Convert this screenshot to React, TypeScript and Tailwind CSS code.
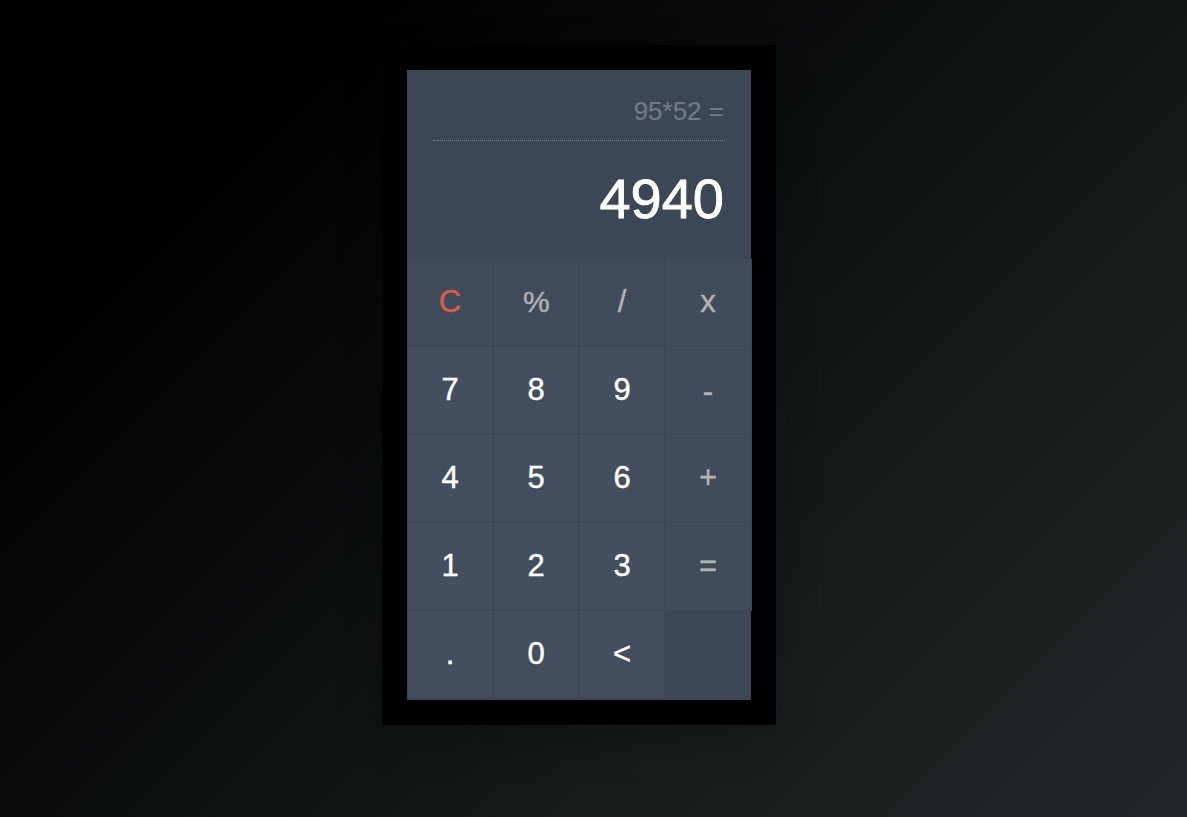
import { useState } from "react";

const keys = ["C", "%", "/", "x", "7", "8", "9", "-", "4", "5", "6", "+", "1", "2", "3", "=", ".", "0", "<"];

function keyStyle(key: string) {
  if (key === "C") return "bg-[#404c5c] text-[31px] text-[#d95d4e]";
  if (key === "%") return "bg-[#404c5c] text-[30px] tracking-[-0.5px] text-[#b2b2b2]";
  if (key === "-") return "bg-[#404c5c] pt-[3px] text-[31px] text-[#b2b2b2]";
  if ("/x+=".includes(key)) return "bg-[#404c5c] text-[31px] text-[#b2b2b2]";
  return "bg-[#434f5f] text-[31px] text-white";
}

function compute(expression: string) {
  const tokens = expression.match(/\d+\.?\d*|[-+*/%]/g) ?? [];
  const terms = [Number(tokens[0] ?? 0)];
  for (let i = 1; i + 1 < tokens.length; i += 2) {
    const value = Number(tokens[i + 1]);
    const last = terms.length - 1;
    if (tokens[i] === "*") terms[last] *= value;
    else if (tokens[i] === "/") terms[last] /= value;
    else if (tokens[i] === "%") terms[last] %= value;
    else terms.push(tokens[i] === "-" ? -value : value);
  }
  return String(terms.reduce((a, b) => a + b, 0));
}

export default function App() {
  const [history, setHistory] = useState("95*52 =");
  const [value, setValue] = useState("4940");

  function press(key: string) {
    if (key === "C") {
      setHistory("");
      setValue("0");
    } else if (key === "<") {
      setValue(value.slice(0, -1) || "0");
    } else if (key === "=") {
      setHistory(`${value} =`);
      setValue(compute(value));
    } else {
      const next = key === "x" ? "*" : key;
      setValue(value === "0" && /\d/.test(key) ? next : value + next);
    }
  }

  return (
    <main className="h-screen overflow-hidden bg-[linear-gradient(135deg,#000_18%,#121616_59%,#23292b_100%)] pt-[45px] pl-[382px] font-['Liberation_Sans',Arial,sans-serif]">
      <section className="h-[680px] w-[394px] border-[25px] border-black bg-[#3c4756] shadow-[0_15px_40px_rgba(0,0,0,0.2)]">
        <div className="h-[189px] px-[26px] pt-[22px] text-right">
          <div className="h-[49px] border-b border-dotted border-[#79818a] pr-px text-[26px] leading-[38px] text-[#727a84] [-webkit-text-stroke:0.2px]">
            {history}
          </div>
          <div className="pt-[22px] pr-px text-[56px] leading-[72px] text-white [-webkit-text-stroke:0.8px]">
            {value}
          </div>
        </div>
        <div className="ml-px grid w-[344px] grid-cols-4">
          {keys.map((key) => (
            <button
              key={key}
              onClick={() => press(key)}
              className={`h-[88px] cursor-pointer border-r-2 border-b-2 border-[#3c4857] leading-[36px] [-webkit-text-stroke:0.4px] ${keyStyle(key)}`}
            >
              {key}
            </button>
          ))}
        </div>
      </section>
    </main>
  );
}
